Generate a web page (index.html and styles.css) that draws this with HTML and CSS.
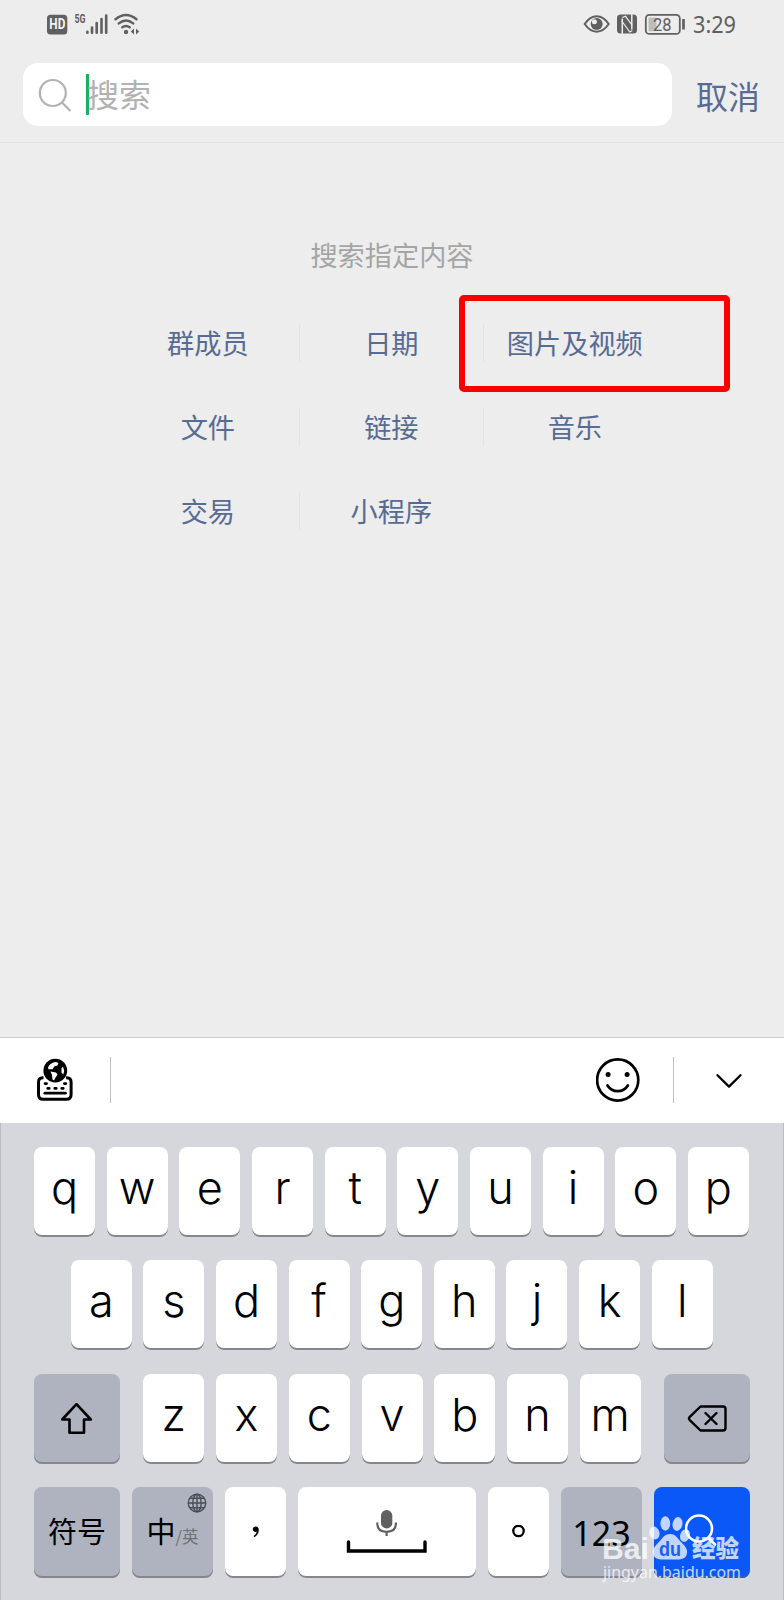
FILE: index.html
```html
<!DOCTYPE html>
<html lang="zh-CN">
<head>
<meta charset="utf-8">
<title>搜索</title>
<link rel="stylesheet" href="styles.css">
</head>
<body>
<div class="phone">
  <header class="top">
    <div class="status">
      <svg class="status-left" width="96" height="24" viewBox="46 12 96 24">
        <rect x="47" y="14.700" width="20.300" height="19.800" rx="3.500" fill="#606060"/>
        <text x="49.300" y="29.400" class="hd" textLength="16" lengthAdjust="spacingAndGlyphs">HD</text>
        <text x="74.500" y="23" class="net" textLength="11" lengthAdjust="spacingAndGlyphs">5G</text>
        <g stroke="#606060" stroke-width="2.600" stroke-linecap="round">
          <path d="M87.400 31.700v1M92 27.500v5.200M96.700 23v9.700M101.500 19v13.700M106.200 15.500v17.200"/>
        </g>
        <g fill="none" stroke="#606060" stroke-width="2.500" stroke-linecap="round">
          <path d="M115.500 19.300Q126 10.800 136.500 19.300M118.800 23.400Q126 17.600 133.200 23.400M122.300 27.300Q126 24.600 129.700 27.300"/>
        </g>
        <circle cx="126" cy="32" r="2.200" fill="#606060"/>
        <path d="M134 28.500v6l-3.200-3zM136 28.500v6l3.200-3z" fill="#606060"/>
      </svg>
      <svg class="status-right" width="160" height="24" viewBox="582 12 160 24">
        <path d="M584.700 24Q590 16.300 596.700 16.300T608.700 24Q603.400 31.700 596.700 31.700T584.700 24z" fill="none" stroke="#606060" stroke-width="2"/>
        <circle cx="596.700" cy="24" r="6" fill="#606060"/>
        <circle cx="594.400" cy="21.800" r="2.500" fill="#ededed"/>
        <path d="M620.500 14.500h13q3.500 0 3.500 3.500v12q0 3.500-3.500 3.500h-13q-3.500 0-3.500-3.500v-12q0-3.500 3.500-3.500z" fill="#606060"/>
        <path d="M622.300 34V18.500M631.800 14v15.500" fill="none" stroke="#ededed" stroke-width="1.500"/>
        <path d="M622.300 17.500l3.200-1.200 6.800 9.200M621.800 21l8 11 2.500-1.500" fill="none" stroke="#ededed" stroke-width="1.200"/>
        <rect x="645.800" y="14.900" width="34" height="19" rx="3.500" fill="none" stroke="#606060" stroke-width="1.800"/>
        <rect x="648.500" y="17.500" width="8" height="13.800" rx="1" fill="#bdbdbd"/>
        <path d="M683.500 19v10.500" stroke="#606060" stroke-width="2.700"/>
        <text x="653" y="30.800" class="batt" textLength="18.500" lengthAdjust="spacingAndGlyphs">28</text>
        <text x="693" y="33" class="time" textLength="43" lengthAdjust="spacingAndGlyphs">3:29</text>
      </svg>
    </div>
    <div class="search-row">
      <div class="search-box">
        <svg width="34" height="34" viewBox="0 0 34 34" fill="none" stroke="#b2b2b2" stroke-width="2.200">
          <circle cx="14.800" cy="15" r="13"/><path d="M24 24.500l8.500 8.500"/>
        </svg>
        <span class="caret"></span>
        <span class="placeholder">搜索</span>
      </div>
      <a class="cancel">取消</a>
    </div>
  </header>

  <main class="content">
    <p class="hint">搜索指定内容</p>
    <div class="filters">
      <a>群成员</a><a>日期</a><a class="marked">图片及视频</a>
      <a>文件</a><a>链接</a><a>音乐</a>
      <a>交易</a><a>小程序</a>
    </div>
  </main>

  <section class="ime">
    <div class="toolbar">
      <svg class="globe-kb" width="40" height="46" viewBox="35 1057 40 46">
        <path d="M43.500 1077.700h-.8q-4.200 0-4.200 4.500v12.300q0 4.800 4.700 4.800h23.200q4.700 0 4.700-4.800v-12.300q0-4.500-4.200-4.500h-.8" fill="none" stroke="#000" stroke-width="3"/>
        <path d="M45 1083.600h1.600M64.300 1083.600h1.600M47.700 1088.400h1.600M54.700 1088.400h1.600M61.700 1088.400h1.600" stroke="#000" stroke-width="2.600" stroke-linecap="round"/>
        <path d="M44.800 1093.200h20.600" stroke="#000" stroke-width="2.700" stroke-linecap="round"/>
        <circle cx="55.300" cy="1070.700" r="11.900" fill="#000"/>
        <path d="M48 1067.500q2-5 8-5.500l2.500 1-1 2.500-3 .8-2 3h-4zM50.500 1071.500l5.500 1 1.500 2-2.500 4-1 2-1.500-1-.5-4.500z" fill="#fff"/>
        <path d="M63 1066.500q2 4 .3 8l-1.800-2v-4z" fill="#fff"/>
      </svg>
      <span class="rule"></span>
      <span class="space"></span>
      <svg width="44" height="44" viewBox="0 0 44 44" fill="none" stroke="#000" stroke-width="2.700" stroke-linecap="round">
        <circle cx="21.700" cy="22" r="20.600"/>
        <path d="M11.500 27.500Q15.200 33.200 21.700 33.200T31.900 27.500"/>
        <circle cx="12.100" cy="16.500" r="2.500" fill="#000" stroke="none"/><circle cx="31.100" cy="16.500" r="2.500" fill="#000" stroke="none"/>
      </svg>
      <span class="rule rule-right"></span>
      <svg width="26" height="15" viewBox="0 0 26 15" fill="none" stroke="#000" stroke-width="2.300" stroke-linecap="round" stroke-linejoin="round"><path d="M1.500 2.300L13 13.600L24.500 2.300"/></svg>
    </div>
    <div class="keys">
      <div class="krow row1"><b>q</b><b>w</b><b>e</b><b>r</b><b>t</b><b>y</b><b>u</b><b>i</b><b>o</b><b>p</b></div>
      <div class="krow row2"><b>a</b><b>s</b><b>d</b><b>f</b><b>g</b><b>h</b><b>j</b><b>k</b><b>l</b></div>
      <div class="krow row3">
        <b class="fn shift"><svg width="32" height="32" viewBox="0 0 32 32" fill="none" stroke="#000" stroke-width="2.600" stroke-linejoin="round"><path d="M15.500 1.200L29.800 16.500H23V29.700H8.500V16.500H1.200z"/></svg></b>
        <b>z</b><b>x</b><b>c</b><b>v</b><b>b</b><b>n</b><b>m</b>
        <b class="fn del"><svg width="40" height="28" viewBox="0 0 40 28" fill="none" stroke="#000" stroke-width="2.400" stroke-linejoin="round" stroke-linecap="round"><path d="M13.500 1.500h22.500q2.500 0 2.500 2.500v19q0 2.500-2.500 2.500H13.500L2.500 14.800q-1-1.300 0-2.600zM18.500 8l11 11M29.500 8l-11 11"/></svg></b>
      </div>
      <div class="krow row4">
        <b class="fn sym">符号</b>
        <b class="fn lang"><span class="zh">中</span><span class="en">/英</span>
          <svg class="globe" width="20" height="20" viewBox="0 0 20 20" fill="none" stroke="#4a4d55" stroke-width="1.400"><circle cx="10" cy="10" r="8.700"/><ellipse cx="10" cy="10" rx="4.200" ry="8.700"/><path d="M10 1v18M1 10h18M3 5.300h14M3 14.700h14"/></svg>
        </b>
        <b class="punct"><svg width="8" height="14" viewBox="0 0 8 14"><path d="M3.600 1.500a2.700 2.700 0 1 0-.3 5.400l1.500-.2q-.4 2.500-3.300 4.200l.9 1.300Q6.800 9.500 6.800 5.100 6.800 1.700 3.600 1.500z"/></svg></b>
        <b class="spacebar"><svg width="82" height="44" viewBox="0 0 82 44" fill="none"><rect x="35" y="0" width="11.300" height="18.500" rx="5.600" fill="#606060"/><path d="M31.300 12.500v1q0 8.300 9.300 8.300t9.300-8.300v-1M40.600 21.500v4.500" stroke="#606060" stroke-width="2.200"/><path d="M2.500 32v9h76.500v-9" stroke="#000" stroke-width="3.400" stroke-linecap="round"/></svg></b>
        <b class="punct"><svg width="14" height="14" viewBox="0 0 14 14" fill="none" stroke="#000" stroke-width="2.300"><circle cx="6.500" cy="6" r="5.200"/></svg></b>
        <b class="fn num">123</b>
        <b class="go"><svg width="34" height="34" viewBox="0 0 34 34" fill="none" stroke="#fff" stroke-width="2.600" stroke-linecap="round"><circle cx="14" cy="15.500" r="13"/><path d="M23.500 25l6.500 6.500"/></svg></b>
      </div>
    </div>
  </section>

  <svg class="watermark" width="150" height="74" viewBox="600 1512 150 74">
    <g fill="#fff">
      <text x="602" y="1558.500" class="brand" textLength="47" lengthAdjust="spacingAndGlyphs">Bai</text>
      <ellipse cx="654.500" cy="1533" rx="5" ry="6.500" transform="rotate(-15 654.500 1533)"/>
      <ellipse cx="665.300" cy="1523.500" rx="4.900" ry="7.200"/>
      <ellipse cx="677.500" cy="1524" rx="4.900" ry="7" transform="rotate(12 677.500 1524)"/>
      <ellipse cx="685" cy="1535.500" rx="4.800" ry="6.500" transform="rotate(20 685 1535.500)"/>
      <path d="M670 1534c6 0 8 5 12 9 5 5 6 8 4.500 12-2 5-7 4.500-16.500 4.500s-14.500.5-16.500-4.500c-1.500-4-.5-7 4.500-12 4-4 6-9 12-9z"/>
      <text x="692" y="1557" class="jy" textLength="47" lengthAdjust="spacingAndGlyphs">经验</text>
      <text x="603" y="1577.500" class="url" textLength="138" lengthAdjust="spacingAndGlyphs">jingyan.baidu.com</text>
    </g>
    <text x="659" y="1555.500" class="du" textLength="22" lengthAdjust="spacingAndGlyphs">du</text>
  </svg>
</div>
</body>
</html>
```
FILE: styles.css
```css
*, *::before, *::after { box-sizing: border-box; }
body { margin: 0; background: #ededed; font-family: "Noto Sans", "Noto Sans CJK SC", sans-serif; }
svg { display: block; flex: none; }
.phone { position: relative; width: 784px; height: 1600px; display: flex; flex-direction: column; overflow: hidden; background: #ededed; }

.top { height: 143px; border-bottom: 1px solid #e2e2e2; }
.status { height: 63px; padding: 12px 42px 0 46px; display: flex; justify-content: space-between; }
.status svg { overflow: visible; }
.status text { fill: #606060; font-family: Roboto, sans-serif; }
.status .hd { fill: #f4f4f4; font-size: 14px; font-weight: 700; }
.status .net { font-size: 12px; font-weight: 700; }
.status .batt { font-size: 19px; }
.status .time { font-family: "Noto Sans", sans-serif; font-size: 23px; }

.search-row { display: flex; align-items: center; height: 63px; padding-left: 23px; }
.search-box { width: 649px; height: 63px; padding-left: 15px; border-radius: 15px; background: #fff; display: flex; align-items: center; }
.caret { width: 3px; height: 41px; margin-left: 14px; background: #12b564; }
.placeholder { margin-left: -2px; padding-bottom: 4px; font: 32px/46px "Noto Sans CJK SC", sans-serif; color: #b2b2b2; }
.cancel { margin-left: 24px; padding-top: 1px; font: 32px/46px "Noto Sans CJK SC", sans-serif; color: #576b95; }

.content { flex: 1; padding-top: 91px; }
.hint { margin: 0; text-align: center; font: 27.2px/40px "Noto Sans CJK SC", sans-serif; color: #a5a5a5; }
.filters { margin: 26px 0 0 115.600px; display: grid; grid-template-columns: repeat(3, 183.5px); grid-auto-rows: 84px; }
.filters a { position: relative; display: flex; align-items: center; justify-content: center; padding-left: 1px; font: 27.200px/40px "Noto Sans CJK SC", sans-serif; color: #576b95; }
.filters a:not(:nth-child(3n+1))::before { content: ""; position: absolute; left: 0; top: 24px; width: 1px; height: 38px; background: #e3e3e3; }
.filters .marked::after { content: ""; position: absolute; left: -24px; top: -5px; width: 271px; height: 97px; border: 6.500px solid #fb0000; border-radius: 5px; }

.ime { height: 563px; }
.toolbar { height: 86px; border-top: 1px solid #cbcbcb; background: #fff; display: flex; align-items: center; padding: 0 42px 1px 35px; }
.rule { width: 1px; height: 46px; background: #bebebe; margin-left: 35px; }
.space { flex: 1; }
.rule-right { margin: 0 42px 0 33px; }
.keys { height: 477px; padding: 24px 33px 0; border: solid #bbbcc0; border-width: 0 1px; background: #d6d7dc; }
.krow { display: flex; justify-content: space-between; height: 90px; margin-bottom: 23.3px; }
.krow b { position: relative; display: flex; align-items: center; justify-content: center; width: 61px; height: 90px; padding-bottom: 8px; border-radius: 8px; background: #fff; box-shadow: inset 0 -2px 0 #85878c; font-family: Inter, sans-serif; font-weight: 350; font-size: 45px; line-height: 60px; color: #000; }
.row1 { padding-right: 1px; }
.row2 { padding: 0 37.300px 0 36.800px; }
.krow .fn { background: #aeb3bf; }
.krow .shift, .krow .del { width: 86px; padding-bottom: 0; }
.shift { margin-right: 11.500px; }
.del { margin-left: 11.500px; }
.row4 b { height: 91px; }
.krow .sym { width: 86px; padding-bottom: 4px; font: 29px/44px "Noto Sans CJK SC", sans-serif; }
.krow .lang { width: 81px; align-items: baseline; padding-top: 21px; font-family: "Noto Sans CJK SC", sans-serif; font-weight: 400; line-height: 44px; }
.zh { font-size: 29px; }
.en { font-size: 16.500px; color: #6d7179; }
.globe { position: absolute; right: 6px; top: 6px; }
.krow .punct { padding-bottom: 1px; }
.krow .spacebar { width: 178px; padding: 2px 0 3px; }
.krow .num { width: 81px; font: 34px/46px "Noto Sans", sans-serif; padding: 4px 0 3px; }
.krow .go { width: 96px; padding-bottom: 5px; background: #0a58f8; box-shadow: inset 0 -2px 0 #345aa8; }

.watermark { position: absolute; left: 600px; top: 1512px; opacity: .75; }
.brand { font: 700 30px "Liberation Sans", sans-serif; }
.jy { font: 900 24px "Noto Sans CJK SC", sans-serif; }
.url { font: 16px "Noto Sans", sans-serif; }
.du { font: 700 20px "Liberation Sans", sans-serif; fill: #2463e8; }
```
